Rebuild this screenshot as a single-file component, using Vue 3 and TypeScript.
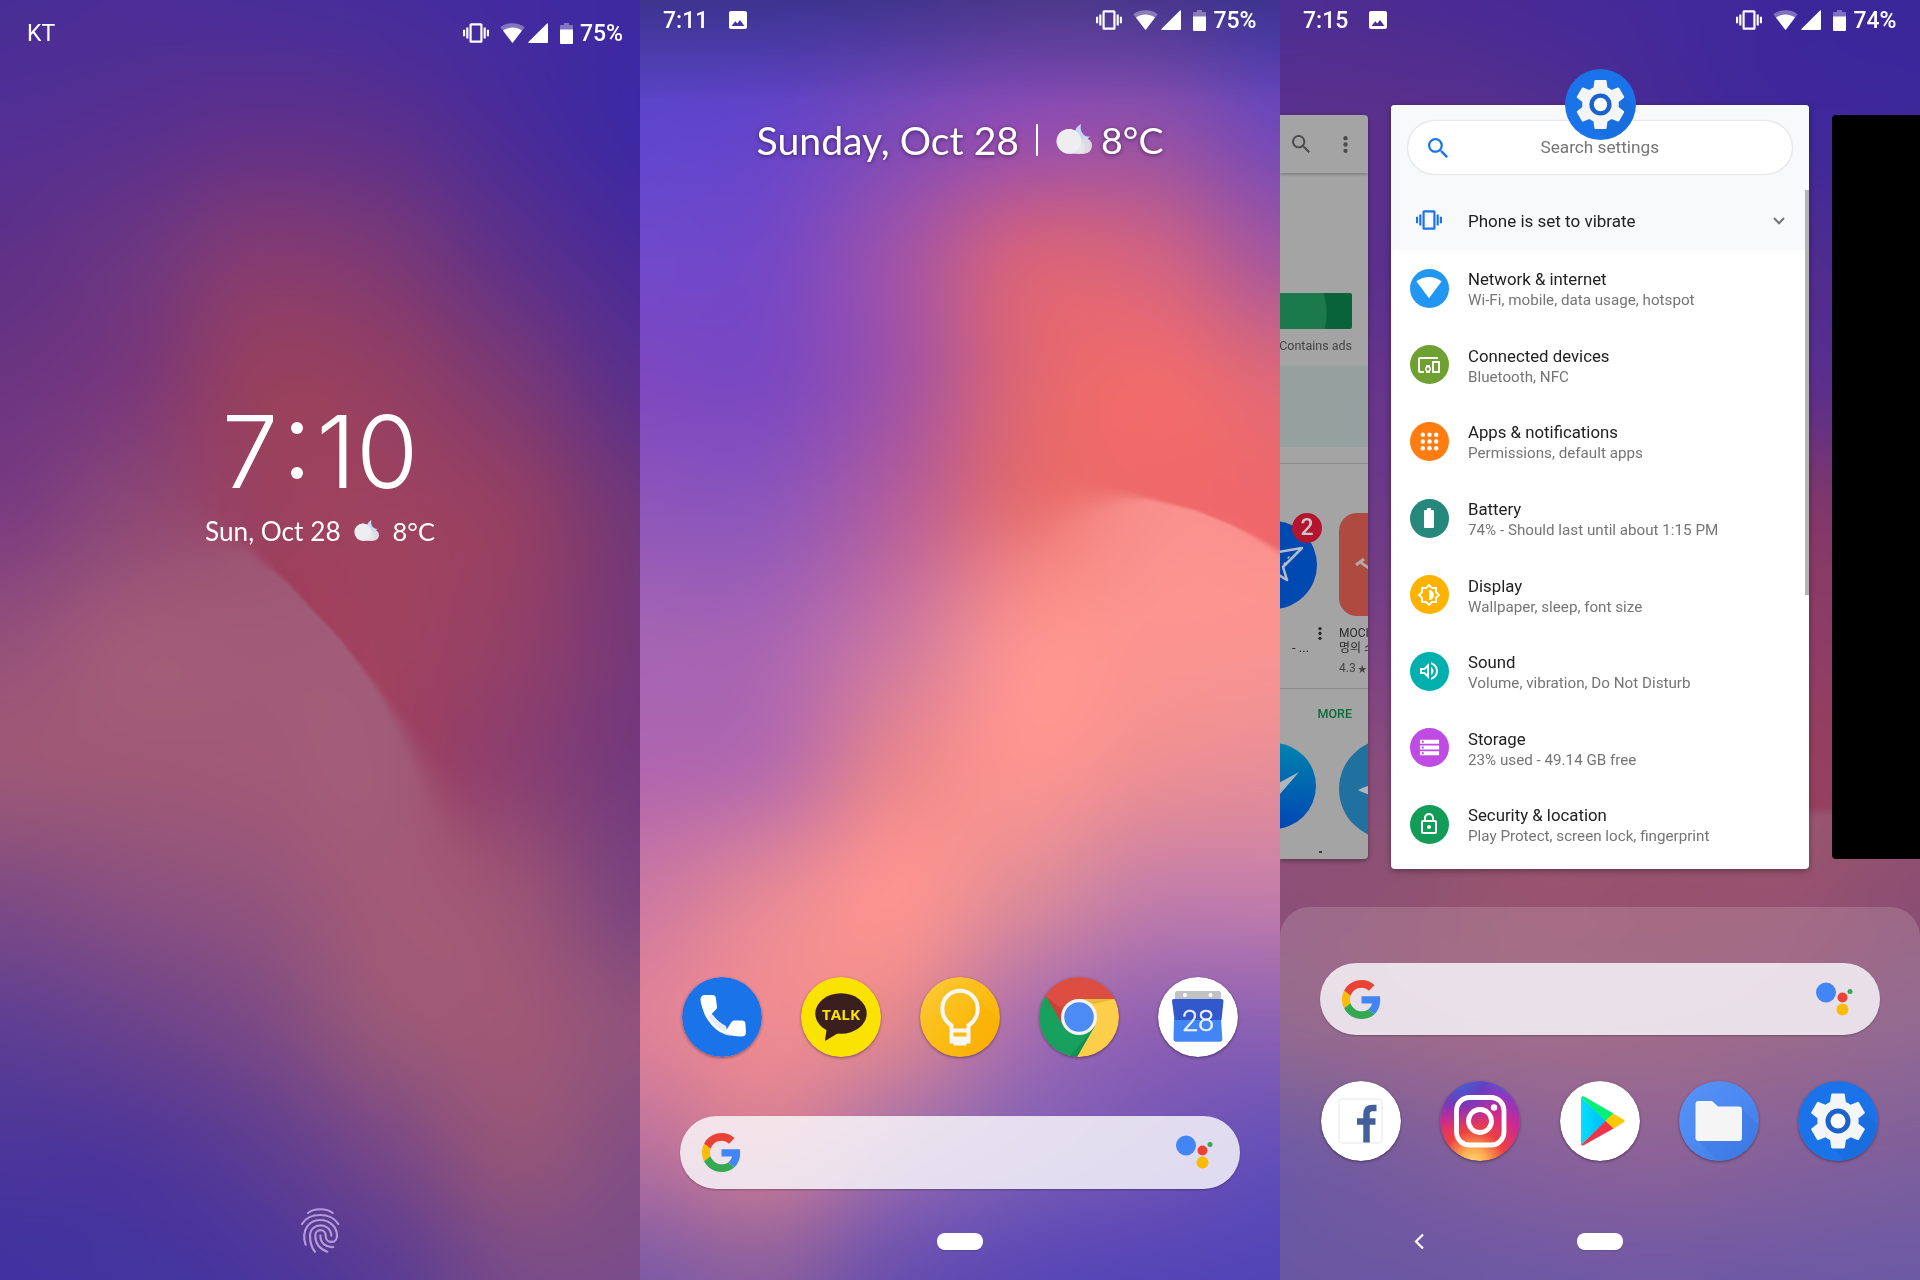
<script setup lang="ts">
import { onMounted, ref } from 'vue'

interface Wallpaper {
  /** Colours on a 6 x 11 lattice, above the ridge line. */
  back: string[]
  /** Rows of the lattice that differ below the ridge line. */
  front: Record<number, string>
  /** Ridge line as x, y, softness. */
  ridge: [number, number, number][]
}

const WIDTH = 640
const HEIGHT = 1280
const STEP = 128

const lockPaper: Wallpaper = {
  back: [
    '482e94 4c2e96 4a2e98 472d9b 422ba0 3e29a1',
    '532f94 58308f 60318a 5b308c 4a2c98 3c29a3',
    '5f3187 6c3681 833b72 7b3976 5e3189 4a2b98',
    '6c3581 7a387a 96405f 933f63 7b3975 5a308c',
    '7b3c80 8c4876 9a4161 9d4260 933f64 70377a',
    '94507a 9e5878 a04260 9f4260 924068 763879',
    '9c5877 9e5976 a15a77 a04462 8c4070 743a7c',
    '7f4b83 8a5080 93547c a25a76 9b5475 7b447f',
    '5f3f93 6b438c 7c4a85 985878 9f5876 8f527c',
    '4b369a 4f3699 5d3d92 784887 935479 834f83',
    '4132a0 43349f 4a369c 5a3c94 784b88 7a4c88',
  ],
  front: {
    4: '7b3c80 8c4876 9c5270 9f5470 9f5470 70377a',
    5: '94507a a05b78 a05b76 a05b76 984c6c 763879',
    6: '9c5877 9e5976 a15a77 a15c77 94456e 743a7c',
  },
  ridge: [[0, 540, 80], [190, 528, 50], [245, 546, 14], [286, 581, 3], [341, 640, 2], [380, 691, 9], [410, 740, 28], [450, 815, 65], [640, 1100, 90]],
}

const homePaper: Wallpaper = {
  back: [
    '5040b8 5040ba 5742b6 6446b2 6045b4 4f40ba',
    '5f46cb 6545c8 7c4ab8 924db0 9050a8 7149b8',
    '7049ca 7648c5 a053a8 d4627d d06283 a5579f',
    '7e49c0 7d49c0 a253a5 de6673 f06b6c df6878',
    '8f56ba 9057b9 b65f9b e56d70 ee6a6b ee676b',
    'a464b2 aa65b1 ce789f fb928f f07a78 ee676b',
    'b066ae b86caa e8868f fb9490 ee8f93 e78e98',
    'cc78a0 e58896 fb9390 de8b99 c47ea8 c37daa',
    'de8198 ee8b92 e08791 aa6fae 9162b3 8d62b3',
    'b8719c cc7b96 a06dac 8060b4 7355b5 6450b8',
    '7f5ba5 8a5f9f 6a50ae 5b48b5 5545b6 5244b7',
  ],
  front: {
    3: '7e49c0 7d49c0 a253a5 e37076 f58783 f98c88',
    4: '8f56ba 9057b9 b65f9b e8787b f98f8c fa908d',
    5: 'a464b2 aa65b1 ce789f fb928f fb9490 fa9491',
  },
  ridge: [[0, 560, 90], [380, 530, 60], [440, 502, 32], [480, 496, 12], [506, 498, 4], [555, 510, 2], [592, 525, 2], [615, 537, 4], [640, 552, 7]],
}

const overviewPaper: Wallpaper = {
  back: [
    '4d2e92 4c2c92 482a96 43299a 3c279a 3a279a',
    '5a308c 5a308c 54308e 482a94 40289a 3e289a',
    '5c318c 5a308c 60308a 58308a 502d8e 482b92',
    '6a3688 66348a 70367c 7a3a78 60308a 502d8c',
    '70398a 6e3b85 80406f 8c3e68 843868 743878',
    '86467c 7a4082 8f4668 963f62 903c66 8a3c68',
    '904f78 884c7c 985068 98405f 96405e 903e62',
    '8c5078 905272 98546f 96405e 96405e 8c4068',
    '81517c 8c5078 905476 8f5276 8a5078 80507e',
    '583f92 66428c 74468a 784886 70468a 69448a',
    '513a92 533a93 573c94 593c94 563d94 543e95',
  ],
  front: {
    6: '904f78 884c7c 985068 985570 985570 94506f',
    7: '8c5078 905272 98546f 96526d 965270 8c4e72',
  },
  ridge: [[0, 820, 60], [400, 816, 10], [640, 808, 5]],
}

function parseRow(row: string): number[][] {
  return row.split(' ').map((hex) => [0, 2, 4].map((i) => parseInt(hex.slice(i, i + 2), 16)))
}

function spline(a: number, b: number, c: number, d: number, t: number): number {
  return b + 0.5 * t * (c - a + t * (2 * a - 5 * b + 4 * c - d + t * (3 * (b - c) + d - a)))
}

function at<T>(list: T[], index: number): T {
  return list[Math.min(list.length - 1, Math.max(0, index))]
}

function sample(grid: number[][][], x: number, y: number, channel: number): number {
  const col = Math.floor(x / STEP)
  const row = Math.floor(y / STEP)
  const tx = x / STEP - col
  const ty = y / STEP - row
  const line = (r: number) => {
    const cells = at(grid, r)
    return spline(at(cells, col - 1)[channel], at(cells, col)[channel], at(cells, col + 1)[channel], at(cells, col + 2)[channel], tx)
  }
  return spline(line(row - 1), line(row), line(row + 1), line(row + 2), ty)
}

function paint(canvas: HTMLCanvasElement | null, paper: Wallpaper): void {
  const context = canvas?.getContext('2d')
  if (!context) return
  const back = paper.back.map(parseRow)
  const front = paper.back.map((row, i) => parseRow(paper.front[i] ?? row))
  const w = WIDTH / 2
  const h = HEIGHT / 2
  const image = context.createImageData(w, h)
  for (let px = 0; px < w; px++) {
    const x = px * 2 + 1
    let k = 0
    while (k < paper.ridge.length - 2 && x > paper.ridge[k + 1][0]) k++
    const [x0, y0, s0] = paper.ridge[k]
    const [x1, y1, s1] = paper.ridge[k + 1]
    const t = (x - x0) / (x1 - x0)
    const ridgeY = y0 + (y1 - y0) * t
    const soft = s0 + (s1 - s0) * t
    for (let py = 0; py < h; py++) {
      const y = py * 2 + 1
      const raw = Math.min(1, Math.max(0, (y - ridgeY) / (2 * soft) + 0.5))
      const mix = raw * raw * (3 - 2 * raw)
      const offset = (py * w + px) * 4
      for (let c = 0; c < 3; c++) {
        const a = mix < 1 ? sample(back, x, y, c) : 0
        const b = mix > 0 ? sample(front, x, y, c) : 0
        image.data[offset + c] = a * (1 - mix) + b * mix
      }
      image.data[offset + 3] = 255
    }
  }
  context.putImageData(image, 0, 0)
}

const lockCanvas = ref<HTMLCanvasElement | null>(null)
const homeCanvas = ref<HTMLCanvasElement | null>(null)
const overviewCanvas = ref<HTMLCanvasElement | null>(null)

onMounted(() => {
  paint(lockCanvas.value, lockPaper)
  paint(homeCanvas.value, homePaper)
  paint(overviewCanvas.value, overviewPaper)
})

const statusIcons = ['vibrate', 'wifi', 'signal', 'charge']
const homeDock = ['phone', 'talk', 'keep', 'chrome', 'calendar']
const overviewDock = ['facebook', 'instagram', 'play', 'files', 'settings']

const settings = [
  { icon: 's-wifi', color: '#2196f3', title: 'Network & internet', detail: 'Wi-Fi, mobile, data usage, hotspot' },
  { icon: 's-devices', color: '#6fa132', title: 'Connected devices', detail: 'Bluetooth, NFC' },
  { icon: 's-apps', color: '#ff7c10', title: 'Apps & notifications', detail: 'Permissions, default apps' },
  { icon: 's-battery', color: '#26887c', title: 'Battery', detail: '74% - Should last until about 1:15 PM' },
  { icon: 's-display', color: '#ffb300', title: 'Display', detail: 'Wallpaper, sleep, font size' },
  { icon: 's-sound', color: '#00b0ae', title: 'Sound', detail: 'Volume, vibration, Do Not Disturb' },
  { icon: 's-storage', color: '#bf4be4', title: 'Storage', detail: '23% used - 49.14 GB free' },
  { icon: 's-lock', color: '#129c57', title: 'Security & location', detail: 'Play Protect, screen lock, fingerprint' },
]
</script>

<template>
  <svg class="sprite" aria-hidden="true">
    <defs>
      <linearGradient id="g-keep" x1="0" y1="0" x2="1" y2="1">
        <stop offset="0" stop-color="#fdcb3a" /><stop offset=".5" stop-color="#fbbc14" /><stop offset="1" stop-color="#fcb000" />
      </linearGradient>
      <radialGradient id="g-insta" cx=".42" cy="1.02" r="1.05">
        <stop offset="0" stop-color="#ffd776" /><stop offset=".16" stop-color="#fbab50" /><stop offset=".38" stop-color="#ee4040" />
        <stop offset=".65" stop-color="#d02890" /><stop offset=".88" stop-color="#8a38c0" /><stop offset="1" stop-color="#4a63d2" />
      </radialGradient>
      <radialGradient id="g-insta-blue" cx=".25" cy="0" r=".6">
        <stop offset="0" stop-color="#3f68d8" /><stop offset=".5" stop-color="#5a3fc0" stop-opacity=".7" /><stop offset="1" stop-color="#8a38c0" stop-opacity="0" />
      </radialGradient>
      <linearGradient id="g-play" x1="0" y1="0" x2="1" y2="0"><stop offset="0" stop-color="#00e1ff" /><stop offset="1" stop-color="#00b8ff" /></linearGradient>
      <linearGradient id="g-files" x1="0" y1="0" x2="1" y2="1"><stop offset="0" stop-color="#5894f8" /><stop offset="1" stop-color="#3f7de8" /></linearGradient>
      <linearGradient id="g-msg" x1="0" y1="0" x2="0" y2="1"><stop offset="0" stop-color="#0084ad" /><stop offset="1" stop-color="#0046b4" /></linearGradient>
      <clipPath id="disc"><circle cx="40" cy="40" r="40" /></clipPath>
    </defs>

    <symbol id="vibrate" viewBox="0 0 24 24">
      <path d="M0 15h2V9H0v6zm3 2h2V7H3v10zm19-8v6h2V9h-2zm-3 8h2V7h-2v10zM16.5 3h-9C6.67 3 6 3.67 6 4.5v15c0 .83.67 1.5 1.5 1.5h9c.83 0 1.5-.67 1.5-1.5v-15c0-.83-.67-1.5-1.5-1.5zM16 19H8V5h8v14z" />
    </symbol>
    <symbol id="wifi" viewBox="0 0 25 20">
      <path d="M.3 4.2C7.5-1.1 17.5-1.1 24.7 4.2L12.5 20z" opacity=".35" />
      <path d="M3 7.6C8.5 3.6 16.5 3.6 22 7.6L12.5 20z" />
    </symbol>
    <symbol id="signal" viewBox="0 0 20 20"><path d="M19 .4Q20 0 20 1V19Q20 20 19 20H1Q0 20 .4 19z" /></symbol>
    <symbol id="charge" viewBox="0 0 13 21">
      <path d="M4 0H9V2H12Q13 2 13 3V7H0V3Q0 2 1 2H4z" opacity=".35" /><path d="M0 6.5H13V20Q13 21 12 21H1Q0 21 0 20z" />
    </symbol>
    <symbol id="photo" viewBox="3 3 18 18">
      <path d="M21 19V5c0-1.1-.9-2-2-2H5c-1.1 0-2 .9-2 2v14c0 1.1.9 2 2 2h14c1.1 0 2-.9 2-2zM5.5 18L9.3 13.2 11.3 15.6 14 12 18.500 18z" fill-rule="evenodd" />
    </symbol>
    <symbol id="search" viewBox="3 3 17.5 17.5">
      <path d="M15.5 14h-.79l-.28-.27A6.47 6.47 0 0 0 16 9.5 6.5 6.5 0 1 0 9.5 16c1.61 0 3.09-.59 4.23-1.57l.27.28v.79l5 4.99L20.49 19l-4.99-5zm-6 0C7.01 14 5 11.99 5 9.5S7.01 5 9.5 5 14 7.01 14 9.5 11.99 14 9.5 14z" />
    </symbol>
    <symbol id="dots" viewBox="0 0 4 14"><circle cx="2" cy="1.8" r="1.8" /><circle cx="2" cy="7" r="1.8" /><circle cx="2" cy="12.2" r="1.8" /></symbol>
    <symbol id="cloud" viewBox="0 0 36 30">
      <path d="M25 0C20 3 17 8 19.5 13L29 18 34 12C30 14.5 23 9 25 0z" fill="#c5d8fb" />
      <rect x="14" y="14" width="22" height="15.5" rx="7.7" fill="#dcdce0" />
      <path d="M13 5A12.4 12.4 0 0 0 13 29.700H28.500V20L25 17.500A12.400 12.400 0 0 0 13 5z" fill="#e6e6e8" />
      <circle cx="12.8" cy="17.3" r="12.3" fill="#eeeef0" />
    </symbol>
    <symbol id="finger" viewBox="0 0 120 146">
      <g fill="none" stroke="currentColor" stroke-width="6.5" stroke-linecap="round" transform="translate(-60 -52)">
        <path d="M84 73C102 58 140 58 158 73M66 106C88 70 152 70 175 106" />
        <path d="M77 168C62 125 88 94 120 94C150 94 171 115 171 141C171 166 137 166 137 141C137 119 106 119 106 141C106 164 120 181 142 189" />
        <path d="M105 189C94 176 90 160 90 141C90 100 153 100 154 141M121 141C121 163 138 177 160 175" />
      </g>
    </symbol>
    <symbol id="google" viewBox="0 0 48 48">
      <path fill="#ea4335" d="M24 9.5c3.54 0 6.71 1.22 9.21 3.6l6.85-6.85C35.9 2.38 30.47 0 24 0 14.62 0 6.51 5.38 2.56 13.22l7.98 6.19C12.43 13.72 17.74 9.5 24 9.5z" />
      <path fill="#4285f4" d="M46.98 24.55c0-1.57-.15-3.09-.38-4.55H24v9.02h12.94c-.58 2.96-2.26 5.48-4.78 7.18l7.73 6c4.51-4.18 7.09-10.36 7.09-17.65z" />
      <path fill="#fbbc05" d="M10.53 28.59c-.48-1.45-.76-2.99-.76-4.59s.27-3.14.76-4.59l-7.98-6.19C.92 16.46 0 20.12 0 24c0 3.88.92 7.54 2.56 10.78l7.97-6.19z" />
      <path fill="#34a853" d="M24 48c6.48 0 11.93-2.13 15.89-5.81l-7.73-6c-2.15 1.45-4.92 2.3-8.16 2.3-6.26 0-11.57-4.22-13.47-9.91l-7.98 6.19C6.51 42.62 14.62 48 24 48z" />
    </symbol>
    <symbol id="assistant" viewBox="0 0 38 34">
      <circle cx="11" cy="10.5" r="10" fill="#4285f4" /><circle cx="27.5" cy="15.5" r="5" fill="#ea4335" />
      <circle cx="35" cy="9.500" r="2.5" fill="#34a853" /><circle cx="27.5" cy="27.5" r="6" fill="#fbbc05" />
    </symbol>

    <symbol id="phone" viewBox="0 0 80 80">
      <circle cx="40" cy="40" r="40" fill="#1a73e8" />
      <path d="M24 33L31 38Q36 45 44 49L46 57C34 53 23 44 20 29z" fill="#e6ebf5" />
      <path d="M18.5 23Q18.5 18 23 18H31Q33.5 18 33.8 20.5L35 30Q35 31.5 34 32.5L26.5 40Q19 32 18.5 23z" fill="#fff" />
      <path d="M42.5 56L49.5 45Q50.5 43.5 52 43.5H60.5Q63 43.5 63.3 46L64 55Q64 59.5 59.5 59.5Q50 59.5 42.5 56z" fill="#fff" />
      <path d="M26 39.5Q33 50 43 55L42.5 56L50 59Q32 57 22 36z" fill="#fff" />
    </symbol>
    <symbol id="talk" viewBox="0 0 80 80">
      <circle cx="40" cy="40" r="40" fill="#fae300" />
      <ellipse cx="40" cy="36.5" rx="25.7" ry="20.3" fill="#3b1e1e" /><path d="M26 50L24 63Q24 64 25 63.5L38 55.5z" fill="#3b1e1e" />
      <text x="40" y="43" class="talk-text" text-anchor="middle" textLength="38" lengthAdjust="spacingAndGlyphs">TALK</text>
    </symbol>
    <symbol id="keep" viewBox="0 0 80 80">
      <circle cx="40" cy="40" r="40" fill="url(#g-keep)" />
      <path d="M54 18L80 44A40 40 0 0 1 46 79L32 66 50 66 50 50Z" fill="#f9ab00" opacity=".35" />
      <path d="M31.500 64.500V48.500Q22.300 42.500 22.300 31.500A17.700 17.700 0 0 1 57.700 31.500Q57.700 42.500 48.500 48.500V64.500Z M31.500 53.500H48.500M31.500 61.500H48.500" fill="none" stroke="#f7f7f7" stroke-width="4" />
      <path d="M33.5 63H46.5V68.5H33.5zM30 60H50V66H30z" fill="#f7f7f7" />
    </symbol>
    <symbol id="chrome" viewBox="0 0 80 80">
      <g clip-path="url(#disc)">
        <rect width="80" height="80" fill="#dc4e41" />
        <path d="M40 22H80V80H38L55 50z" fill="#fdce49" />
        <path d="M7 19.5V80H38L56 49 40 58 24 49z" fill="#18a05e" /><path d="M0 10H2L7 19.5 24 49V80H0z" fill="#18a05e" />
        <path d="M40 22H76L56 27z" fill="#d29f20" opacity=".45" /><path d="M51 56L38 80H30z" fill="#0a6b3a" opacity=".3" /><path d="M7 19.5L22 45 24 33z" fill="#9c2b20" opacity=".3" />
      </g>
      <circle cx="40" cy="40" r="18" fill="#f4f4f4" /><circle cx="40" cy="40" r="14.8" fill="#4c8bf5" />
    </symbol>
    <symbol id="calendar" viewBox="0 0 80 80">
      <circle cx="40" cy="40" r="40" fill="#fff" />
      <path d="M17 25V16.5Q17 14 19.5 14H60.5Q63 14 63 16.5V25z" fill="#c0c1c3" /><circle cx="27" cy="18" r="2" fill="#fff" /><circle cx="52.5" cy="18" r="2" fill="#fff" />
      <path d="M16 42H63L64.3 62Q64.3 64.7 62 64.7H18Q15.5 64.7 15.5 62z" fill="#4285f4" />
      <path d="M15.5 22H63.5Q65.7 22 65.5 24L63.5 43H16.5L14 24Q14 22 15.5 22z" fill="#3259cc" />
      <text x="40" y="54" class="day" text-anchor="middle">28</text>
    </symbol>
    <symbol id="facebook" viewBox="0 0 80 80">
      <circle cx="40" cy="40" r="40" fill="#fff" /><rect x="18" y="18" width="43" height="44" rx="3" fill="#fff" stroke="#e6e6e8" />
      <path d="M55.5 27H51.5Q45.5 27 45.5 33V61.5M36 40.5H54.5" fill="none" stroke="#43609c" stroke-width="6.5" />
    </symbol>
    <symbol id="instagram" viewBox="0 0 80 80">
      <circle cx="40" cy="40" r="40" fill="url(#g-insta)" /><circle cx="40" cy="40" r="40" fill="url(#g-insta-blue)" />
      <g fill="none" stroke="#fff" stroke-width="4.8"><rect x="16.5" y="16.5" width="47.5" height="47.5" rx="13" /><circle cx="40" cy="40" r="11.5" /></g>
      <circle cx="54" cy="26.5" r="3.2" fill="#fff" />
    </symbol>
    <symbol id="play" viewBox="0 0 80 80">
      <circle cx="40" cy="40" r="40" fill="#fff" />
      <path d="M21 16V64L46 40z" fill="url(#g-play)" /><path d="M21 16Q23 14.5 25 16L53.5 32.5 45.5 40z" fill="#00f076" />
      <path d="M53 32.5L63.5 38.5Q65.5 40 63.5 41.5L53 48 45.5 40z" fill="#ffc900" /><path d="M21 64Q23 65 25 63.5L53.5 47.5 45.5 40z" fill="#ed3448" />
    </symbol>
    <symbol id="files" viewBox="0 0 80 80">
      <circle cx="40" cy="40" r="40" fill="url(#g-files)" /><path d="M62 27L80 44A40 40 0 0 1 39 80L20 60H60z" fill="#2d66cc" opacity=".18" />
      <path d="M16.5 23Q16.5 20 19.5 20H33L39 25.5H60Q63 25.5 63 28.5V57Q63 60 60 60H19.5Q16.5 60 16.5 57z" fill="#f5f5f5" />
    </symbol>
    <symbol id="settings" viewBox="0 0 80 80">
      <circle cx="40" cy="40" r="40" fill="#1a73e8" /><path d="M63 27L79 43A40 40 0 0 1 46 80L36 66 60 54z" fill="#0f4ea8" opacity=".14" />
      <path transform="translate(7 7) scale(2.75)" fill="#f4f5f7" d="M19.43 12.98c.04-.32.07-.64.07-.98s-.03-.66-.07-.98l2.11-1.65c.19-.15.24-.42.12-.64l-2-3.46c-.12-.22-.39-.3-.61-.22l-2.49 1c-.52-.4-1.08-.73-1.69-.98l-.38-2.65C14.46 2.18 14.25 2 14 2h-4c-.25 0-.46.18-.49.42l-.38 2.65c-.61.25-1.17.59-1.69.98l-2.49-1c-.23-.09-.49 0-.61.22l-2 3.46c-.13.22-.07.49.12.64l2.11 1.65c-.04.32-.07.65-.07.98s.03.66.07.98l-2.11 1.65c-.19.15-.24.42-.12.64l2 3.46c.12.22.39.3.61.22l2.49-1c.52.4 1.08.73 1.69.98l.38 2.65c.03.24.24.42.49.42h4c.25 0 .46-.18.49-.42l.38-2.65c.61-.25 1.17-.59 1.69-.98l2.49 1c.23.09.49 0 .61-.22l2-3.46c.12-.22.07-.49-.12-.64l-2.11-1.65z" />
      <circle cx="40" cy="40" r="12.5" fill="#1b62cd" /><circle cx="40" cy="40" r="7.5" fill="#fff" />
    </symbol>

    <symbol id="s-wifi" viewBox="0 0 24 24"><path d="M12 21.5L.3 5.8Q12-2 23.7 5.8z" /></symbol>
    <symbol id="s-devices" viewBox="0 0 24 24"><path d="M3 6h18V4H3c-1.1 0-2 .9-2 2v12c0 1.1.9 2 2 2h4v-2H3V6zm10 6H9v1.78c-.61.55-1 1.33-1 2.22s.39 1.67 1 2.22V20h4v-1.78c.61-.55 1-1.34 1-2.22s-.39-1.67-1-2.22V12zm-2 5.5c-.83 0-1.5-.67-1.5-1.5s.67-1.5 1.5-1.5 1.5.67 1.5 1.5-.67 1.5-1.5 1.5zM22 8h-6c-.5 0-1 .5-1 1v10c0 .5.5 1 1 1h6c.5 0 1-.5 1-1V9c0-.5-.5-1-1-1zm-1 10h-4v-8h4v8z" /></symbol>
    <symbol id="s-apps" viewBox="0 0 24 24">
      <circle v-for="n in 9" :key="n" :cx="5 + ((n - 1) % 3) * 7" :cy="5 + Math.floor((n - 1) / 3) * 7" r="2.3" />
    </symbol>
    <symbol id="s-battery" viewBox="0 0 24 24"><path d="M15.67 4H14V2h-4v2H8.33C7.6 4 7 4.6 7 5.33v15.33C7 21.4 7.6 22 8.33 22h7.33c.74 0 1.34-.6 1.34-1.33V5.33C17 4.6 16.4 4 15.67 4z" /></symbol>
    <symbol id="s-display" viewBox="0 0 24 24"><path fill-rule="evenodd" d="M20 8.69V4h-4.69L12 .69 8.69 4H4v4.69L.69 12 4 15.31V20h4.69L12 23.31 15.31 20H20v-4.69L23.31 12zM18 14.48V18h-3.52L12 20.48 9.52 18H6v-3.52L3.52 12 6 9.52V6h3.52L12 3.52 14.48 6H18v3.52L20.48 12z" /><path d="M12 7v10c2.76 0 5-2.24 5-5s-2.24-5-5-5z" /></symbol>
    <symbol id="s-sound" viewBox="0 0 24 24"><path fill-rule="evenodd" d="M3 9v6h4l5 5V4L7 9H3zM10 8.83v6.34L7.83 13H5v-2h2.83zM16.5 12c0-1.77-1.02-3.29-2.5-4.03v8.05c1.48-.73 2.5-2.25 2.5-4.02zM14 3.23v2.06c2.89.86 5 3.54 5 6.71s-2.11 5.85-5 6.71v2.06c4.01-.91 7-4.49 7-8.77 0-4.28-2.99-7.86-7-8.77z" /></symbol>
    <symbol id="s-storage" viewBox="0 0 24 24"><path fill-rule="evenodd" d="M2 20h20v-4H2v4zm2-3h2v2H4v-2zM2 4v4h20V4H2zm4 3H4V5h2v2zm-4 7h20v-4H2v4zm2-3h2v2H4v-2z" /></symbol>
    <symbol id="s-lock" viewBox="0 0 24 24"><path fill-rule="evenodd" d="M12 17c1.1 0 2-.9 2-2s-.9-2-2-2-2 .9-2 2 .9 2 2 2zm6-9h-1V6c0-2.76-2.24-5-5-5S7 3.24 7 6v2H6c-1.1 0-2 .9-2 2v10c0 1.1.9 2 2 2h12c1.1 0 2-.9 2-2V10c0-1.1-.9-2-2-2zM8.9 6c0-1.71 1.39-3.1 3.1-3.1s3.1 1.39 3.1 3.1v2H8.9V6zM18 20H6V10h12v10z" /></symbol>
  </svg>

  <main class="screens">
    <section class="screen lock">
      <canvas ref="lockCanvas" class="wallpaper" width="320" height="640"></canvas>
      <header class="status">
        <span class="carrier">KT</span>
        <div class="indicators">
          <svg v-for="icon in statusIcons" :key="icon" :class="icon"><use :href="`#${icon}`" /></svg>
          <span>75%</span>
        </div>
      </header>
      <div class="clock">7<span class="colon"><i></i><i></i></span>10</div>
      <div class="lock-date">
        <span>Sun, Oct 28</span>
        <svg class="cloud"><use href="#cloud" /></svg>
        <span>8°C</span>
      </div>
      <svg class="finger"><use href="#finger" /></svg>
    </section>

    <section class="screen home">
      <canvas ref="homeCanvas" class="wallpaper" width="320" height="640"></canvas>
      <header class="status">
        <div class="left"><span>7:11</span><svg class="photo"><use href="#photo" /></svg></div>
        <div class="indicators">
          <svg v-for="icon in statusIcons" :key="icon" :class="icon"><use :href="`#${icon}`" /></svg>
          <span>75%</span>
        </div>
      </header>
      <div class="glance">
        <span class="day-name">Sunday, Oct 28</span>
        <span class="bar"></span>
        <svg class="cloud"><use href="#cloud" /></svg>
        <span class="temp">8°C</span>
      </div>
      <div class="dock">
        <svg v-for="app in homeDock" :key="app" class="app"><use :href="`#${app}`" /></svg>
      </div>
      <div class="searchbar">
        <svg class="google"><use href="#google" /></svg>
        <svg class="assistant"><use href="#assistant" /></svg>
      </div>
      <nav class="nav"><span class="pill"></span></nav>
    </section>

    <section class="screen overview">
      <canvas ref="overviewCanvas" class="wallpaper" width="320" height="640"></canvas>
      <header class="status">
        <div class="left"><span>7:15</span><svg class="photo"><use href="#photo" /></svg></div>
        <div class="indicators">
          <svg v-for="icon in statusIcons" :key="icon" :class="icon"><use :href="`#${icon}`" /></svg>
          <span>74%</span>
        </div>
      </header>

      <div class="cards">
        <article class="store">
          <div class="store-bar">
            <svg class="store-search"><use href="#search" /></svg>
            <svg class="store-dots"><use href="#dots" /></svg>
          </div>
          <div class="store-hero"><div class="banner"></div><p>Contains ads</p></div>
          <div class="tint"></div>
          <div class="suggested">
            <div class="app-a">
              <svg class="star-app" viewBox="0 0 88 88">
                <circle cx="44" cy="44" r="44" fill="#0049b0" />
                <path d="M44 32L73 27 54 46 58 59 48 53 38 62M59 36l1 1M55 42l1 1" fill="none" stroke="#b3bccb" stroke-width="2.5" stroke-linejoin="round" />
              </svg>
              <b class="badge">2</b>
              <svg class="mini-dots"><use href="#dots" /></svg>
              <span class="ellipsis">- ...</span>
            </div>
            <div class="app-b">
              <div class="orange"><svg viewBox="0 0 34 34"><path d="M17 18L25 12M21 15L34 24" stroke="#b5a8a0" stroke-width="3" fill="none" /></svg></div>
              <p>MOCI<br />명의 소</p>
              <small>4.3 <i>★</i></small>
            </div>
          </div>
          <div class="more-row"><span>MORE</span></div>
          <div class="similar">
            <svg class="msg-a" viewBox="0 0 86 86"><circle cx="43" cy="43" r="43" fill="url(#g-msg)" /><path d="M30 50L69 29 50 51 38 60z" fill="#b0b5bb" /></svg>
            <svg class="msg-b" viewBox="0 0 100 100"><circle cx="50" cy="50" r="50" fill="#20719f" /><path d="M19 51Q28 46 40 45V59Q24 54 19 51z" fill="#b0b5bb" /></svg>
          </div>
          <div class="speck"></div>
        </article>

        <article class="settings-card">
          <svg class="card-icon"><use href="#settings" /></svg>
          <div class="settings-head">
            <div class="settings-search">
              <svg class="blue-search"><use href="#search" /></svg>
              <span>Search settings</span>
            </div>
            <div class="vibrate-row">
              <svg class="vibrate"><use href="#vibrate" /></svg>
              <span>Phone is set to vibrate</span>
              <svg class="chevron" viewBox="0 0 12 8"><path d="M1 1L6 6.2 11 1" fill="none" stroke="#757575" stroke-width="2" /></svg>
            </div>
          </div>
          <div v-for="item in settings" :key="item.title" class="setting">
            <span class="bubble" :style="{ background: item.color }">
              <svg :class="item.icon"><use :href="`#${item.icon}`" /></svg>
            </span>
            <div><h3>{{ item.title }}</h3><p>{{ item.detail }}</p></div>
          </div>
          <span class="scrollbar"></span>
        </article>

        <article class="black-card"></article>
      </div>

      <div class="sheet">
        <div class="searchbar">
          <svg class="google"><use href="#google" /></svg>
          <svg class="assistant"><use href="#assistant" /></svg>
        </div>
        <div class="dock">
          <svg v-for="app in overviewDock" :key="app" class="app"><use :href="`#${app}`" /></svg>
        </div>
        <nav class="nav">
          <svg class="back" viewBox="0 0 10 16"><path d="M9 1L2 8 9 15" fill="none" stroke="#fff" stroke-width="2.2" /></svg>
          <span class="pill"></span>
        </nav>
      </div>
    </section>
  </main>
</template>

<style>
body {
  overflow: hidden;
}
.talk-text {
  font: 700 15px 'Open Sans', sans-serif;
  fill: #fae300;
}
.day {
  font: 300 29px Roboto, sans-serif;
  fill: #f0f4ff;
  stroke: #f0f4ff;
  stroke-width: 0.4px;
}
</style>

<style scoped>
.sprite {
  position: absolute;
  width: 0;
  height: 0;
}
.screens {
  display: flex;
  width: 1920px;
  height: 1280px;
  overflow: hidden;
  font-family: Roboto, 'Noto Sans CJK KR', sans-serif;
}
h3,
p {
  margin: 0;
  font-weight: 400;
}
svg {
  flex: none;
  display: block;
  fill: currentColor;
}
.screen {
  position: relative;
  isolation: isolate;
  display: flex;
  flex-direction: column;
  width: 640px;
  height: 1280px;
  flex: none;
  overflow: hidden;
  color: #fff;
}
.wallpaper {
  position: absolute;
  z-index: -1;
  left: 0;
  top: 0;
  width: 640px;
  height: 1280px;
}

.status {
  display: flex;
  flex: none;
  justify-content: space-between;
  align-items: center;
  height: 40px;
  padding: 0 23.5px 0 23px;
  font-size: 23px;
  font-weight: 500;
}
.lock .status {
  height: 66px;
  padding: 0 17px 0 27px;
}
.home .status {
  height: 100px;
  padding-bottom: 60px;
  box-sizing: border-box;
  background: linear-gradient(rgba(20, 25, 50, 0.3), rgba(20, 25, 50, 0));
}
.carrier {
  font-weight: 400;
}
.left,
.indicators {
  display: flex;
  align-items: center;
}
.left .photo {
  width: 18px;
  height: 18px;
  margin-left: 23px;
}
.left span {
  width: 43px;
}
.indicators .vibrate {
  width: 26px;
  height: 26px;
  margin-right: 11px;
}
.indicators .wifi {
  width: 25px;
  height: 20px;
  margin-right: 3px;
}
.indicators .signal {
  width: 20px;
  height: 20px;
  margin-right: 12px;
}
.indicators .charge {
  width: 13px;
  height: 21px;
  margin-right: 7px;
}

.clock {
  display: flex;
  justify-content: center;
  margin-top: 287px;
  height: 196px;
  font: 300 101px/196px Inter, sans-serif;
}
.colon {
  display: flex;
  flex-direction: column;
  justify-content: space-between;
  width: 12px;
  height: 57px;
  margin: 69px 13px 0 13px;
}
.colon i {
  width: 12px;
  height: 12px;
  border-radius: 50%;
  background: #fff;
}
.lock-date {
  display: flex;
  align-items: center;
  justify-content: center;
  height: 40px;
  margin-top: -38px;
  font: 400 26.2px/40px Lato, sans-serif;
}
.lock-date .cloud {
  width: 25px;
  height: 21px;
  margin: 0 14px 2px 13px;
}
.lock-date span:last-child {
  font-size: 25.5px;
}
.finger {
  width: 40px;
  height: 48.7px;
  margin: auto auto 25px;
  color: #b59ad6;
}

.glance {
  display: flex;
  align-items: center;
  justify-content: center;
  height: 60px;
  margin-top: 10px;
  font: 400 39.2px/60px Lato, sans-serif;
  text-shadow: 0 1px 4px rgba(30, 10, 50, 0.6);
}
.temp {
  font-size: 37.5px;
}
.bar {
  width: 2px;
  height: 32px;
  margin: 0 18px 0 17px;
  background: #fff;
}
.glance .cloud {
  width: 36px;
  height: 30px;
  margin-right: 9px;
  margin-bottom: 2px;
}
.dock {
  display: flex;
  justify-content: space-between;
  padding: 0 42px;
}
.app {
  width: 80px;
  height: 80px;
  border-radius: 50%;
  box-shadow: 0 1px 3px rgba(0, 0, 0, 0.4);
}
.home .dock {
  margin-top: 807px;
}
.searchbar {
  display: flex;
  align-items: center;
  justify-content: space-between;
  box-sizing: border-box;
  width: 560px;
  height: 73px;
  margin: 0 40px;
  padding: 0 27px 0 22px;
  border-radius: 37px;
  background: rgba(250, 250, 252, 0.82);
  box-shadow: 0 1px 2px rgba(0, 0, 0, 0.25);
}
.home .searchbar {
  margin-top: 58.5px;
}
.google {
  width: 39px;
  height: 39px;
}
.assistant {
  width: 38px;
  height: 34px;
}
.nav {
  display: flex;
  justify-content: center;
  align-items: center;
  margin-top: 44px;
}
.pill {
  width: 46px;
  height: 17px;
  border-radius: 8px;
  background: #fff;
  box-shadow: 0 1px 1px rgba(0, 0, 0, 0.15);
}

.cards {
  display: flex;
  align-items: center;
  justify-content: space-between;
  height: 764px;
  margin-top: 65px;
  flex: none;
}
.store {
  width: 88px;
  height: 744px;
  overflow: hidden;
  border-radius: 0 4px 4px 0;
  background: #a4a4a4;
  color: #2b2b2b;
  box-shadow: 0 2px 5px rgba(0, 0, 0, 0.35);
}
.store-bar {
  display: flex;
  align-items: center;
  justify-content: space-between;
  height: 58px;
  padding: 0 20px 0 12px;
  color: #4c4c4c;
  box-shadow: 0 1px 3px rgba(0, 0, 0, 0.3);
}
.store-search {
  width: 18px;
  height: 18px;
}
.store-dots {
  width: 5px;
  height: 17px;
}
.store-hero {
  height: 73px;
  padding: 120px 16px 0 0;
}
.banner {
  height: 36px;
  border-radius: 0 2px 2px 0;
  background: radial-gradient(circle at -20px 20px, #1b7a4c 66px, #08633a 67px);
}
.store-hero p {
  display: flex;
  justify-content: flex-end;
  margin-top: 9px;
  font-size: 12.5px;
  line-height: 16px;
  white-space: nowrap;
  color: #444;
}
.tint {
  height: 81px;
  background: #96a09f;
}
.suggested {
  display: flex;
  height: 224px;
  margin-top: 16px;
  border: solid #8b8b8b;
  border-width: 1px 0;
}
.app-a {
  position: relative;
  flex: none;
  width: 59px;
}
.star-app {
  width: 88px;
  height: 88px;
  margin: 57px 0 0 -51px;
}
.badge {
  position: absolute;
  left: 12px;
  top: 49px;
  width: 30px;
  height: 30px;
  border-radius: 50%;
  background: #b3152e;
  color: #c9c9c9;
  font: 500 23px/30px Roboto, sans-serif;
  text-align: center;
}
.mini-dots {
  width: 4px;
  height: 13px;
  margin: 18px 0 0 38px;
}
.ellipsis {
  display: block;
  margin: 0 0 0 12px;
  font-size: 13px;
  line-height: 16px;
}
.app-b {
  flex: none;
  width: 100px;
}
.orange {
  width: 100px;
  height: 103px;
  margin-top: 49px;
  border-radius: 18px;
  background: #ae4a40;
}
.orange svg {
  width: 34px;
  height: 34px;
  padding-top: 34px;
}
.app-b p {
  margin-top: 10px;
  font-size: 12px;
  line-height: 15px;
}
.app-b small {
  display: block;
  margin-top: 5px;
  font-size: 12px;
  line-height: 14px;
  color: #444;
}
.app-b small i {
  margin-left: -1px;
  font-size: 9px;
  font-style: normal;
}
.more-row {
  display: flex;
  justify-content: flex-end;
  padding: 17px 16px 0 0;
  font-size: 12.5px;
  font-weight: 500;
  line-height: 16px;
  color: #0b6b3f;
}
.similar {
  display: flex;
  align-items: center;
  margin-top: 17px;
}
.msg-a {
  width: 86px;
  height: 86px;
  margin: -6px 23px 0 -50px;
}
.msg-b {
  width: 100px;
  height: 100px;
}
.speck {
  width: 3px;
  height: 2px;
  margin: 12px 0 0 39px;
  background: #3a3a3a;
}

.settings-card {
  position: relative;
  width: 418px;
  height: 764px;
  border-radius: 4px;
  background: #fff;
  color: #212121;
  box-shadow: 0 2px 6px rgba(0, 0, 0, 0.35);
}
.card-icon {
  position: absolute;
  z-index: 1;
  left: 173.5px;
  top: -36px;
  width: 71px;
  height: 71px;
}
.settings-head {
  height: 145px;
  padding-top: 16px;
  box-sizing: border-box;
  border-radius: 4px 4px 0 0;
  background: #f7f9fb;
}
.settings-search {
  display: flex;
  align-items: center;
  justify-content: space-between;
  box-sizing: border-box;
  height: 53px;
  margin: 0 17px;
  padding: 0 133px 0 20px;
  border-radius: 27px;
  background: #fff;
  font-size: 17.2px;
  line-height: 20px;
  color: #757575;
  box-shadow: 0 0 2px rgba(0, 0, 0, 0.28);
}
.settings-search span {
  padding-bottom: 1px;
}
.blue-search {
  width: 20px;
  height: 20px;
  color: #1a73e8;
}
.vibrate-row {
  display: flex;
  align-items: center;
  height: 58px;
  margin-top: 18px;
  padding: 0 24px 0 25px;
  font-size: 17px;
}
.vibrate-row .vibrate {
  width: 26px;
  height: 26px;
  margin: 0 26px 2px 0;
  color: #1a73e8;
}
.chevron {
  width: 12px;
  height: 8px;
  margin-left: auto;
}
.setting {
  display: flex;
  align-items: center;
  height: 76.6px;
  padding-left: 18.5px;
}
.bubble {
  display: flex;
  align-items: center;
  justify-content: center;
  width: 39px;
  height: 39px;
  margin-right: 19.5px;
  border-radius: 50%;
  color: #fff;
}
.bubble svg {
  width: 24px;
  height: 24px;
}
.bubble .s-wifi {
  width: 26px;
  height: 26px;
}
.bubble .s-apps,
.bubble .s-storage {
  width: 23px;
  height: 23px;
}
.setting div {
  padding-top: 3px;
}
.setting h3 {
  font-size: 16.8px;
  line-height: 22px;
}
.setting p {
  font-size: 15.2px;
  line-height: 21px;
  color: #757575;
}
.scrollbar {
  position: absolute;
  right: 0;
  top: 85px;
  width: 4px;
  height: 405px;
  background: #b4b4b6;
}
.black-card {
  width: 88px;
  height: 744px;
  border-radius: 4px 0 0 4px;
  background: #000;
}
.sheet {
  display: flex;
  flex-direction: column;
  flex: none;
  height: 373px;
  margin-top: 38px;
  border-radius: 30px 30px 0 0;
  background: rgba(255, 255, 255, 0.15);
}
.sheet .searchbar {
  margin-top: 56px;
  height: 72px;
}
.sheet .dock {
  margin-top: 45.5px;
  padding: 0 42px 0 41px;
}
.sheet .nav {
  margin-top: 72px;
  padding-right: 163px;
}
.back {
  width: 10px;
  height: 17px;
  margin-right: 153px;
}
</style>
